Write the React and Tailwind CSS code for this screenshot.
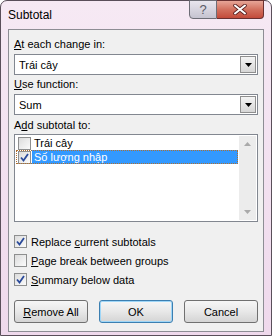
import { useState } from "react";

function Check({ checked }) {
  return (
    <span className="flex items-center justify-center w-[13px] h-[13px] border border-[#8e8f8f] bg-gradient-to-br from-[#dcdcdc] to-[#fbfbfb] shrink-0">
      {checked && (
        <svg width="9" height="9" viewBox="0 0 9 9">
          <path d="M1 4.5 L3.5 7.5 L8 1" fill="none" stroke="#2a4a9a" strokeWidth="1.8" />
        </svg>
      )}
    </span>
  );
}

function Combo({ value }) {
  return (
    <div className="flex h-[21px] border border-[#828790] bg-white">
      <div className="flex-1 flex items-center pl-[4px] text-black">{value}</div>
      <div className="w-[16px] m-px flex items-center justify-center border border-[#8f8f8f] bg-gradient-to-b from-[#f4f4f4] to-[#d6d6d6]">
        <svg width="7" height="4" viewBox="0 0 7 4">
          <path d="M0 0 H7 L3.5 4 Z" fill="#000" />
        </svg>
      </div>
    </div>
  );
}

function Button({ children, primary }) {
  return (
    <button
      className={
        "w-[74px] h-[23px] rounded-[3px] border bg-gradient-to-b from-[#f6f6f6] via-[#e8e8e8] to-[#d4d4d4] text-black " +
        (primary ? "border-[#3c7fb1] shadow-[inset_0_0_0_1px_#9fd6f7]" : "border-[#707070]")
      }
    >
      {children}
    </button>
  );
}

export default function App() {
  const [items] = useState([
    { label: "Trái cây", checked: false },
    { label: "Số lượng nhập", checked: true, selected: true },
  ]);

  return (
    <div
      className="w-[272px] h-[336px] flex flex-col rounded-t-[7px] border border-[#5a4f5a] bg-gradient-to-b from-[#f6e9f4] to-[#efd9ec] text-[11px] leading-[14px]"
      style={{ fontFamily: '"Liberation Sans", Arial, sans-serif' }}
    >
      {/* title bar */}
      <div className="flex h-[28px] shrink-0">
        <div className="flex-1 pl-[7px] pt-[7px] text-[12px] text-black">Subtotal</div>
        <div className="flex mr-[7px] h-[19px] -mt-px">
          <div className="w-[28px] flex items-center justify-center border border-[#6d6d76] rounded-bl-[4px] bg-gradient-to-b from-[#e9e6ee] to-[#c5c3d0] text-[#5a5a66] text-[13px]">
            ?
          </div>
          <div className="w-[47px] flex items-center justify-center border border-l-0 border-[#6a3030] rounded-br-[4px] bg-gradient-to-b from-[#e7a597] via-[#d2705e] to-[#c34a3a]">
            <svg width="14" height="11" viewBox="0 0 14 11">
              <path d="M2 1.5 L12 9.5 M12 1.5 L2 9.5" stroke="#5a2020" strokeWidth="3.6" strokeLinecap="round" />
              <path d="M2 1.5 L12 9.5 M12 1.5 L2 9.5" stroke="#fff" strokeWidth="2" strokeLinecap="round" />
            </svg>
          </div>
        </div>
      </div>

      {/* client area */}
      <div className="flex-1 mx-[7px] mb-[3px] border border-[#8d8d94] bg-[#f0f0f0] px-[5px] pt-[7px] flex flex-col">
        <div className="text-black"><u>A</u>t each change in:</div>
        <div className="mt-[3px]"><Combo value="Trái cây" /></div>
        <div className="mt-[2px] text-black"><u>U</u>se function:</div>
        <div className="mt-[3px]"><Combo value="Sum" /></div>
        <div className="mt-[3px] text-black">A<u>d</u>d subtotal to:</div>
        <div className="mt-[2px] h-[88px] flex border border-[#828790] bg-white">
          <div className="flex-1 pt-px pl-px flex flex-col">
            {items.map((it) => (
              <div
                key={it.label}
                className={
                  "flex items-center h-[14px] " +
                  (it.selected ? "outline outline-1 outline-dotted outline-[#b07030] -outline-offset-1" : "")
                }
              >
                <span className="w-[16px] flex justify-center">
                  <Check checked={it.checked} />
                </span>
                <span
                  className={
                    "flex-1 h-full flex items-center pl-[2px] " +
                    (it.selected ? "bg-[#3399ff] text-white" : "text-black")
                  }
                >
                  {it.label}
                </span>
              </div>
            ))}
          </div>
          <div className="w-[17px] m-px bg-[#ececec] flex flex-col justify-between items-center py-[6px]">
            <svg width="7" height="4" viewBox="0 0 7 4">
              <path d="M0 4 H7 L3.5 0 Z" fill="#a9a9a9" />
            </svg>
            <svg width="7" height="4" viewBox="0 0 7 4">
              <path d="M0 0 H7 L3.5 4 Z" fill="#a9a9a9" />
            </svg>
          </div>
        </div>

        <div className="mt-[13px] flex flex-col gap-[6px] text-black">
          <label className="flex items-center gap-[4px] h-[13px]">
            <Check checked />
            <span>Replace <u>c</u>urrent subtotals</span>
          </label>
          <label className="flex items-center gap-[4px] h-[13px]">
            <Check />
            <span><u>P</u>age break between groups</span>
          </label>
          <label className="flex items-center gap-[4px] h-[13px]">
            <Check checked />
            <span><u>S</u>ummary below data</span>
          </label>
        </div>

        <div className="mt-[14px] flex justify-between">
          <Button><u>R</u>emove All</Button>
          <Button primary>OK</Button>
          <Button>Cancel</Button>
        </div>
      </div>
    </div>
  );
}
